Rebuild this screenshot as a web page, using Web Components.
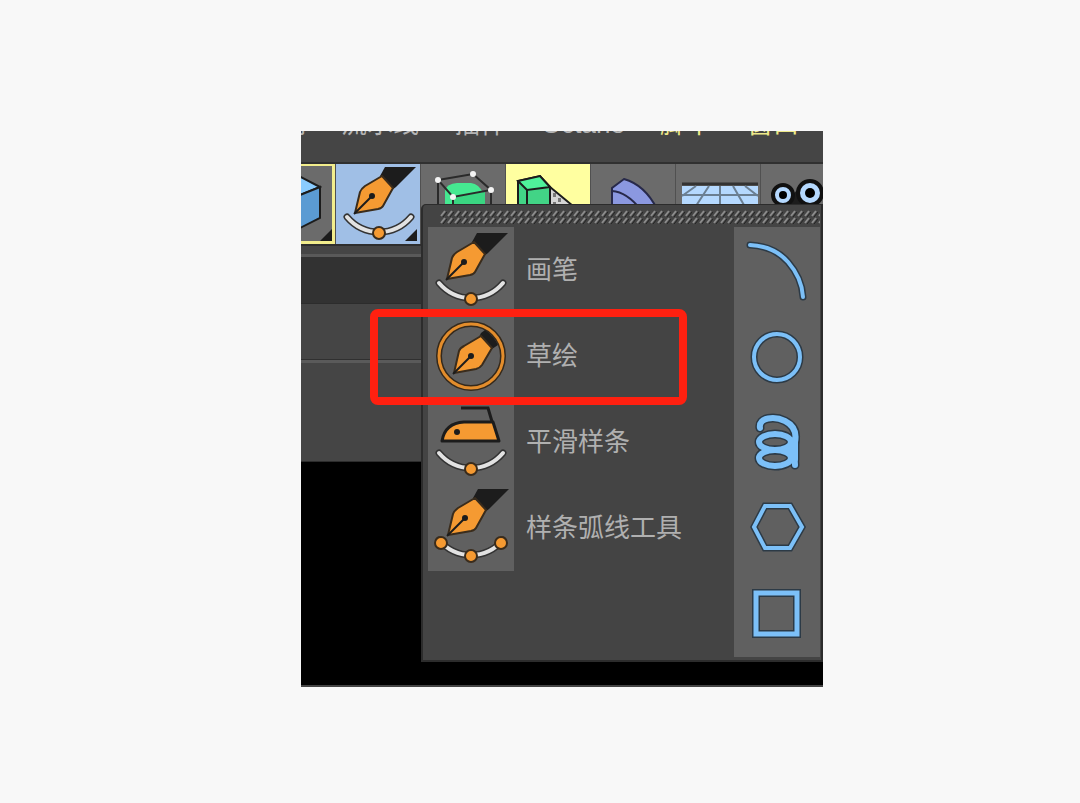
<!DOCTYPE html>
<html lang="zh-CN">
<head>
<meta charset="utf-8">
<title>样条工具</title>
<style>
  body {
    margin: 0;
    background: #f8f8f8;
    font-family: "Liberation Sans", "Noto Sans CJK SC", sans-serif;
  }
  main {
    display: grid;
    grid-template-columns: 301fr 522fr 257fr;
    padding: 131px 0 116px;
  }
  app-window {
    grid-column: 2;
  }
</style>
</head>
<body>
<main>
  <app-window>
    <menu-bar slot="menu">
      <button>雕刻</button>
      <button>流水线</button>
      <button>插件</button>
      <button>Octane</button>
      <button class="plugin">脚本</button>
      <button class="plugin">窗口</button>
    </menu-bar>
    <tool-bar slot="tools">
      <tool-button class="clipped" kind="outlined" icon="cube" label="立方体" more></tool-button>
      <tool-button kind="active" icon="pen-small" label="画笔" more></tool-button>
      <tool-button icon="subdivide" label="细分曲面"></tool-button>
      <tool-button kind="yellow" icon="array" label="阵列"></tool-button>
      <tool-button icon="bend" label="扭曲"></tool-button>
      <tool-button icon="floor" label="地面"></tool-button>
      <tool-button class="last" icon="camera" label="摄像机"></tool-button>
    </tool-bar>
    <tool-popup slot="popup">
      <tool-item icon="pen">画笔</tool-item>
      <tool-item icon="sketch">草绘</tool-item>
      <tool-item icon="iron">平滑样条</tool-item>
      <tool-item icon="arc-tool">样条弧线工具</tool-item>
      <tool-item slot="shapes" icon="arc" label="圆弧"></tool-item>
      <tool-item slot="shapes" icon="circle" label="圆环"></tool-item>
      <tool-item slot="shapes" icon="helix" label="螺旋"></tool-item>
      <tool-item slot="shapes" icon="hexagon" label="多边"></tool-item>
      <tool-item slot="shapes" icon="square" label="矩形"></tool-item>
    </tool-popup>
  </app-window>
</main>

<script>
const INK = '#1c1c1c';
const ORANGE = '#f59a32';
const BLUE = '#7cc0f8';

// spline with a control point, under the pen and iron tools
const curve = (y) => `
  <g fill="none" stroke-linecap="round">
    <path d="M11 ${y} C28 ${y + 20} 58 ${y + 20} 75 ${y}" stroke="#333" stroke-width="7"/>
    <path d="M11 ${y} C28 ${y + 20} 58 ${y + 20} 75 ${y}" stroke="#e2e2e2" stroke-width="4"/>
  </g>
  <circle cx="43" cy="${y + 16}" r="6" fill="${ORANGE}" stroke="#3a2c1c" stroke-width="2"/>`;

const nib = `
  <path d="M49 6H80L60 26L56 29L44 15Z" fill="${INK}"/>
  <path d="M19 52L24 31Q25 28 29 25L46 15L57 27L47 45Q46 47 42 48Z" fill="${ORANGE}" stroke="#3a2c1c" stroke-width="2" stroke-linejoin="round"/>
  <path d="M18 53L36 35" stroke="${INK}" stroke-width="2"/>
  <circle cx="36" cy="35" r="3" fill="${INK}"/>`;

const outlined = (shape, width = 4) => `
  <g fill="none" stroke-linecap="round">
    <g stroke="#2c3a46" stroke-width="${width + 3}">${shape}</g>
    <g stroke="${BLUE}" stroke-width="${width}">${shape}</g>
  </g>`;

const ICONS = {
  'pen': nib + curve(56),
  'pen-small': `<g transform="translate(0 -3)">${nib}${curve(56)}</g>`,
  'sketch': `
    <circle cx="43" cy="43" r="32" fill="none" stroke="#35291b" stroke-width="6"/>
    <circle cx="43" cy="43" r="32" fill="none" stroke="#e38d2c" stroke-width="3"/>
    <path d="M53 20L57 17Q66 23 70 32L64 36L61 35L51 24Z" fill="${INK}"/>
    <path d="M26 60L31 38Q32 35 36 33L53 23L64 35L54 52Q52 55 48 56Z" fill="${ORANGE}" stroke="#3a2c1c" stroke-width="2" stroke-linejoin="round"/>
    <path d="M25 61L43 43" stroke="${INK}" stroke-width="2"/>
    <circle cx="43" cy="43" r="3" fill="${INK}"/>`,
  'iron': `
    <path d="M33 9H60L68 36" fill="none" stroke="${INK}" stroke-width="3"/>
    <path d="M14 42Q17 24 36 23H65L71 42Z" fill="${ORANGE}" stroke="${INK}" stroke-width="3" stroke-linejoin="round"/>
    <circle cx="29" cy="33" r="3" fill="${INK}"/>` + curve(54),
  'arc-tool': `<g transform="translate(1 -2)">${nib}</g>` + curve(55) + `
    <g fill="${ORANGE}" stroke="#3a2c1c" stroke-width="2">
      <circle cx="13" cy="58" r="6"/>
      <circle cx="73" cy="58" r="6"/>
    </g>`,
  'arc': outlined('<path d="M16 18Q40 19 54 35T69 70"/>'),
  'circle': outlined('<circle cx="43" cy="44" r="23"/>'),
  'helix': outlined(`
    <path d="M26 29C24 18 41 17 51 22C63 28 62 38 61 43Q60 49 56 51Q61 54 61 66"/>
    <path d="M61 40V60"/>
    <ellipse cx="41" cy="43" rx="16" ry="8"/>
    <ellipse cx="41" cy="59" rx="16" ry="8"/>`, 6),
  'hexagon': outlined('<path d="M20 42L31 21H56L68 42L56 63H31Z"/>'),
  'square': outlined('<path d="M22 22H63V63H22Z"/>', 5),
  'cube': `
    <path d="M-20 23L-2 12L19 23L-1 31Z" fill="#8accff" stroke="${INK}" stroke-width="2"/>
    <path d="M-1 31L19 23V54L-1 64Z" fill="#5b9bd3" stroke="${INK}" stroke-width="2"/>`,
  'subdivide': `
    <path d="M24 60V26Q26 20 36 19H50Q58 20 62 29V60Z" fill="#45e991"/>
    <path d="M32 33L64 28V60H32Z" fill="#3ad581"/>
    <path d="M17 16L52 10L70 26L32 33ZM17 16V60M32 33V60M70 26V60" fill="none" stroke="#2a2a2a" stroke-width="2"/>
    <g fill="#f4f4f4"><circle cx="17" cy="16" r="3"/><circle cx="52" cy="10" r="3"/><circle cx="70" cy="26" r="3"/><circle cx="32" cy="33" r="3"/></g>`,
  'array': `
    <path d="M44 23L84 56H44Z" fill="#d5d5d5" stroke="${INK}" stroke-width="2"/>
    <path d="M47 29H50V33H47ZM52 34H55V38H52ZM47 38H50V42H47Z" fill="#777"/>
    <path d="M12 17L34 12L44 23V60H12Z" fill="#42d486" stroke="${INK}" stroke-width="2"/>
    <path d="M12 17L21 26L44 23L34 12Z" fill="#4ff29b" stroke="${INK}" stroke-width="2"/>
    <path d="M21 26V60" stroke="${INK}" stroke-width="2"/>`,
  'bend': `
    <path d="M21 60V24L33 15Q54 21 66 45V60Z" fill="#8b98e0" stroke="#27294a" stroke-width="2"/>
    <path d="M21 27Q36 28 50 46" fill="none" stroke="#27294a" stroke-width="2"/>`,
  'floor': `
    <path d="M6 20H82" stroke="#333" stroke-width="3"/>
    <path d="M6 22H82V60H6Z" fill="#b5d9ff"/>
    <path d="M6 31H82M44 22V60M20 22L6 32M33 22L16 48M57 22L72 48M69 22L82 32" fill="none" stroke="#6b7f92" stroke-width="2"/>`,
  'camera': `
    <path d="M22 42L36 26L48 42Z" fill="${INK}"/>
    <circle cx="22" cy="31" r="10" fill="#b5d9ff" stroke="#111" stroke-width="4"/>
    <circle cx="49" cy="29" r="12" fill="#b5d9ff" stroke="#111" stroke-width="4"/>
    <circle cx="22" cy="31" r="4"/><circle cx="49" cy="29" r="5"/>`
};

const svg = (name, width, height) =>
  `<svg width="${width}" height="${height}" viewBox="0 0 ${width} ${height}" aria-hidden="true">${ICONS[name]}</svg>`;

class AppWindow extends HTMLElement {
  constructor() {
    super();
    this.attachShadow({ mode: 'open' }).innerHTML = `
      <style>
        :host {
          display: block;
          position: relative;
          overflow: hidden;
          background: #000;
          border-bottom: 2px solid #444;
        }
        .panel { background: #454545; }
        .gap { height: 8px; }
        .header { height: 46px; background: #323232; border-top: 3px solid #595959; }
        .row { height: 56px; border-top: 1px solid #2c2c2c; }
        .body { height: 98px; border-top: 3px solid #5a5a5a; box-shadow: 0 -1px #303030; }
        .viewport { height: 223px; border-top: 1px solid #2c2c2c; }
        .popup {
          position: absolute;
          top: 73px;
          left: 120px;
          right: 0;
        }
        /* callout around the sketch tool */
        .marker {
          position: absolute;
          top: 178px;
          left: 69px;
          width: 317px;
          height: 96px;
          box-sizing: border-box;
          border: 8px solid #ff2010;
          border-radius: 8px;
          pointer-events: none;
        }
      </style>
      <slot name="menu"></slot>
      <slot name="tools"></slot>
      <div class="panel gap"></div>
      <div class="panel header"></div>
      <div class="panel row"></div>
      <div class="panel body"></div>
      <div class="viewport"></div>
      <div class="popup"><slot name="popup"></slot></div>
      <div class="marker"></div>
    `;
  }
}

class MenuBar extends HTMLElement {
  constructor() {
    super();
    this.attachShadow({ mode: 'open' }).innerHTML = `
      <style>
        :host {
          display: flex;
          justify-content: flex-end;
          align-items: flex-end;
          gap: 35px;
          height: 31px;
          box-sizing: border-box;
          padding: 0 24px 24px 0;
          overflow: hidden;
          background: #454545;
        }
        ::slotted(button) {
          flex: none;
          border: 0;
          padding: 0;
          background: none;
          color: #b4b4b4;
          font: 26px/28px "Liberation Sans", "Noto Sans CJK SC", sans-serif;
        }
        ::slotted(.plugin) { color: #eeea8a; }
      </style>
      <slot></slot>
    `;
  }
}

class ToolBar extends HTMLElement {
  constructor() {
    super();
    this.attachShadow({ mode: 'open' }).innerHTML = `
      <style>
        :host {
          display: flex;
          gap: 1px;
          height: 80px;
          border-top: 2px solid #303030;
          border-bottom: 2px solid #2e2e2e;
          background: #505050;
        }
        ::slotted(*) { flex: 0 0 84px; }
        ::slotted(.clipped) { flex-basis: 34px; }
        ::slotted(.last) { flex: 1 0 0; }
      </style>
      <slot></slot>
    `;
  }
}

class ToolButton extends HTMLElement {
  constructor() {
    super();
    this.attachShadow({ mode: 'open' });
  }

  connectedCallback() {
    this.shadowRoot.innerHTML = `
      <style>
        :host { display: block; min-width: 0; }
        button {
          display: grid;
          grid-template-columns: minmax(0, 1fr);
          width: 100%;
          height: 80px;
          border: 0;
          padding: 0;
          overflow: hidden;
          background: #6b6b6b;
        }
        svg, .more { grid-area: 1 / 1; }
        :host([kind="active"]) button { background: #a0bfe6; }
        :host([kind="yellow"]) button { background: #ffffa0; }
        :host([kind="outlined"]) button { box-shadow: inset -3px 0 #f2ed8c, inset 0 2px #f2ed8c, inset 0 -3px #f2ed8c; }
        .more {
          place-self: end;
          width: 12px;
          height: 12px;
          margin: 0 3px 3px 0;
          background: #1c1c1c;
          clip-path: polygon(100% 0, 100% 100%, 0 100%);
        }
      </style>
      <button aria-label="${this.getAttribute('label')}">
        ${svg(this.getAttribute('icon'), 84, 80)}
        ${this.hasAttribute('more') ? '<span class="more"></span>' : ''}
      </button>
    `;
  }
}

class ToolPopup extends HTMLElement {
  constructor() {
    super();
    this.attachShadow({ mode: 'open' }).innerHTML = `
      <style>
        :host {
          display: block;
          background: #444;
          border: solid #2c2c2c;
          border-width: 1px 2px 2px 2px;
          border-radius: 5px 0 0 0;
          padding: 0 1px 3px 5px;
        }
        .grip { display: block; width: 100%; height: 22px; }
        .columns { display: grid; grid-template-columns: 1fr 86px; align-items: start; }
        .shapes { background: #606060; }
      </style>
      <svg class="grip" aria-hidden="true">
        <defs>
          <pattern id="hatch" width="7" height="7" patternUnits="userSpaceOnUse" x="12" y="5">
            <path d="M1 6L5 1" stroke="#8c8c8c" stroke-width="2"/>
            <path d="M3 7L7 2" stroke="#222" stroke-width="1"/>
          </pattern>
        </defs>
        <rect x="12" y="5" width="100%" height="14" fill="url(#hatch)"/>
      </svg>
      <div class="columns">
        <div><slot></slot></div>
        <div class="shapes"><slot name="shapes"></slot></div>
      </div>
    `;
  }
}

class ToolItem extends HTMLElement {
  constructor() {
    super();
    this.attachShadow({ mode: 'open' });
  }

  connectedCallback() {
    const label = this.getAttribute('label');
    this.shadowRoot.innerHTML = `
      <style>
        :host { display: block; }
        button {
          display: flex;
          align-items: center;
          gap: 12px;
          width: 100%;
          border: 0;
          padding: 0;
          background: none;
          color: #b0b0b0;
          font: 26px/32px "Liberation Sans", "Noto Sans CJK SC", sans-serif;
          text-align: left;
          white-space: nowrap;
        }
        svg { flex: none; background: #606060; }
      </style>
      <button ${label ? `aria-label="${label}"` : ''}>
        ${svg(this.getAttribute('icon'), 86, 86)}
        <slot></slot>
      </button>
    `;
  }
}

customElements.define('app-window', AppWindow);
customElements.define('menu-bar', MenuBar);
customElements.define('tool-bar', ToolBar);
customElements.define('tool-button', ToolButton);
customElements.define('tool-popup', ToolPopup);
customElements.define('tool-item', ToolItem);
</script>
</body>
</html>
